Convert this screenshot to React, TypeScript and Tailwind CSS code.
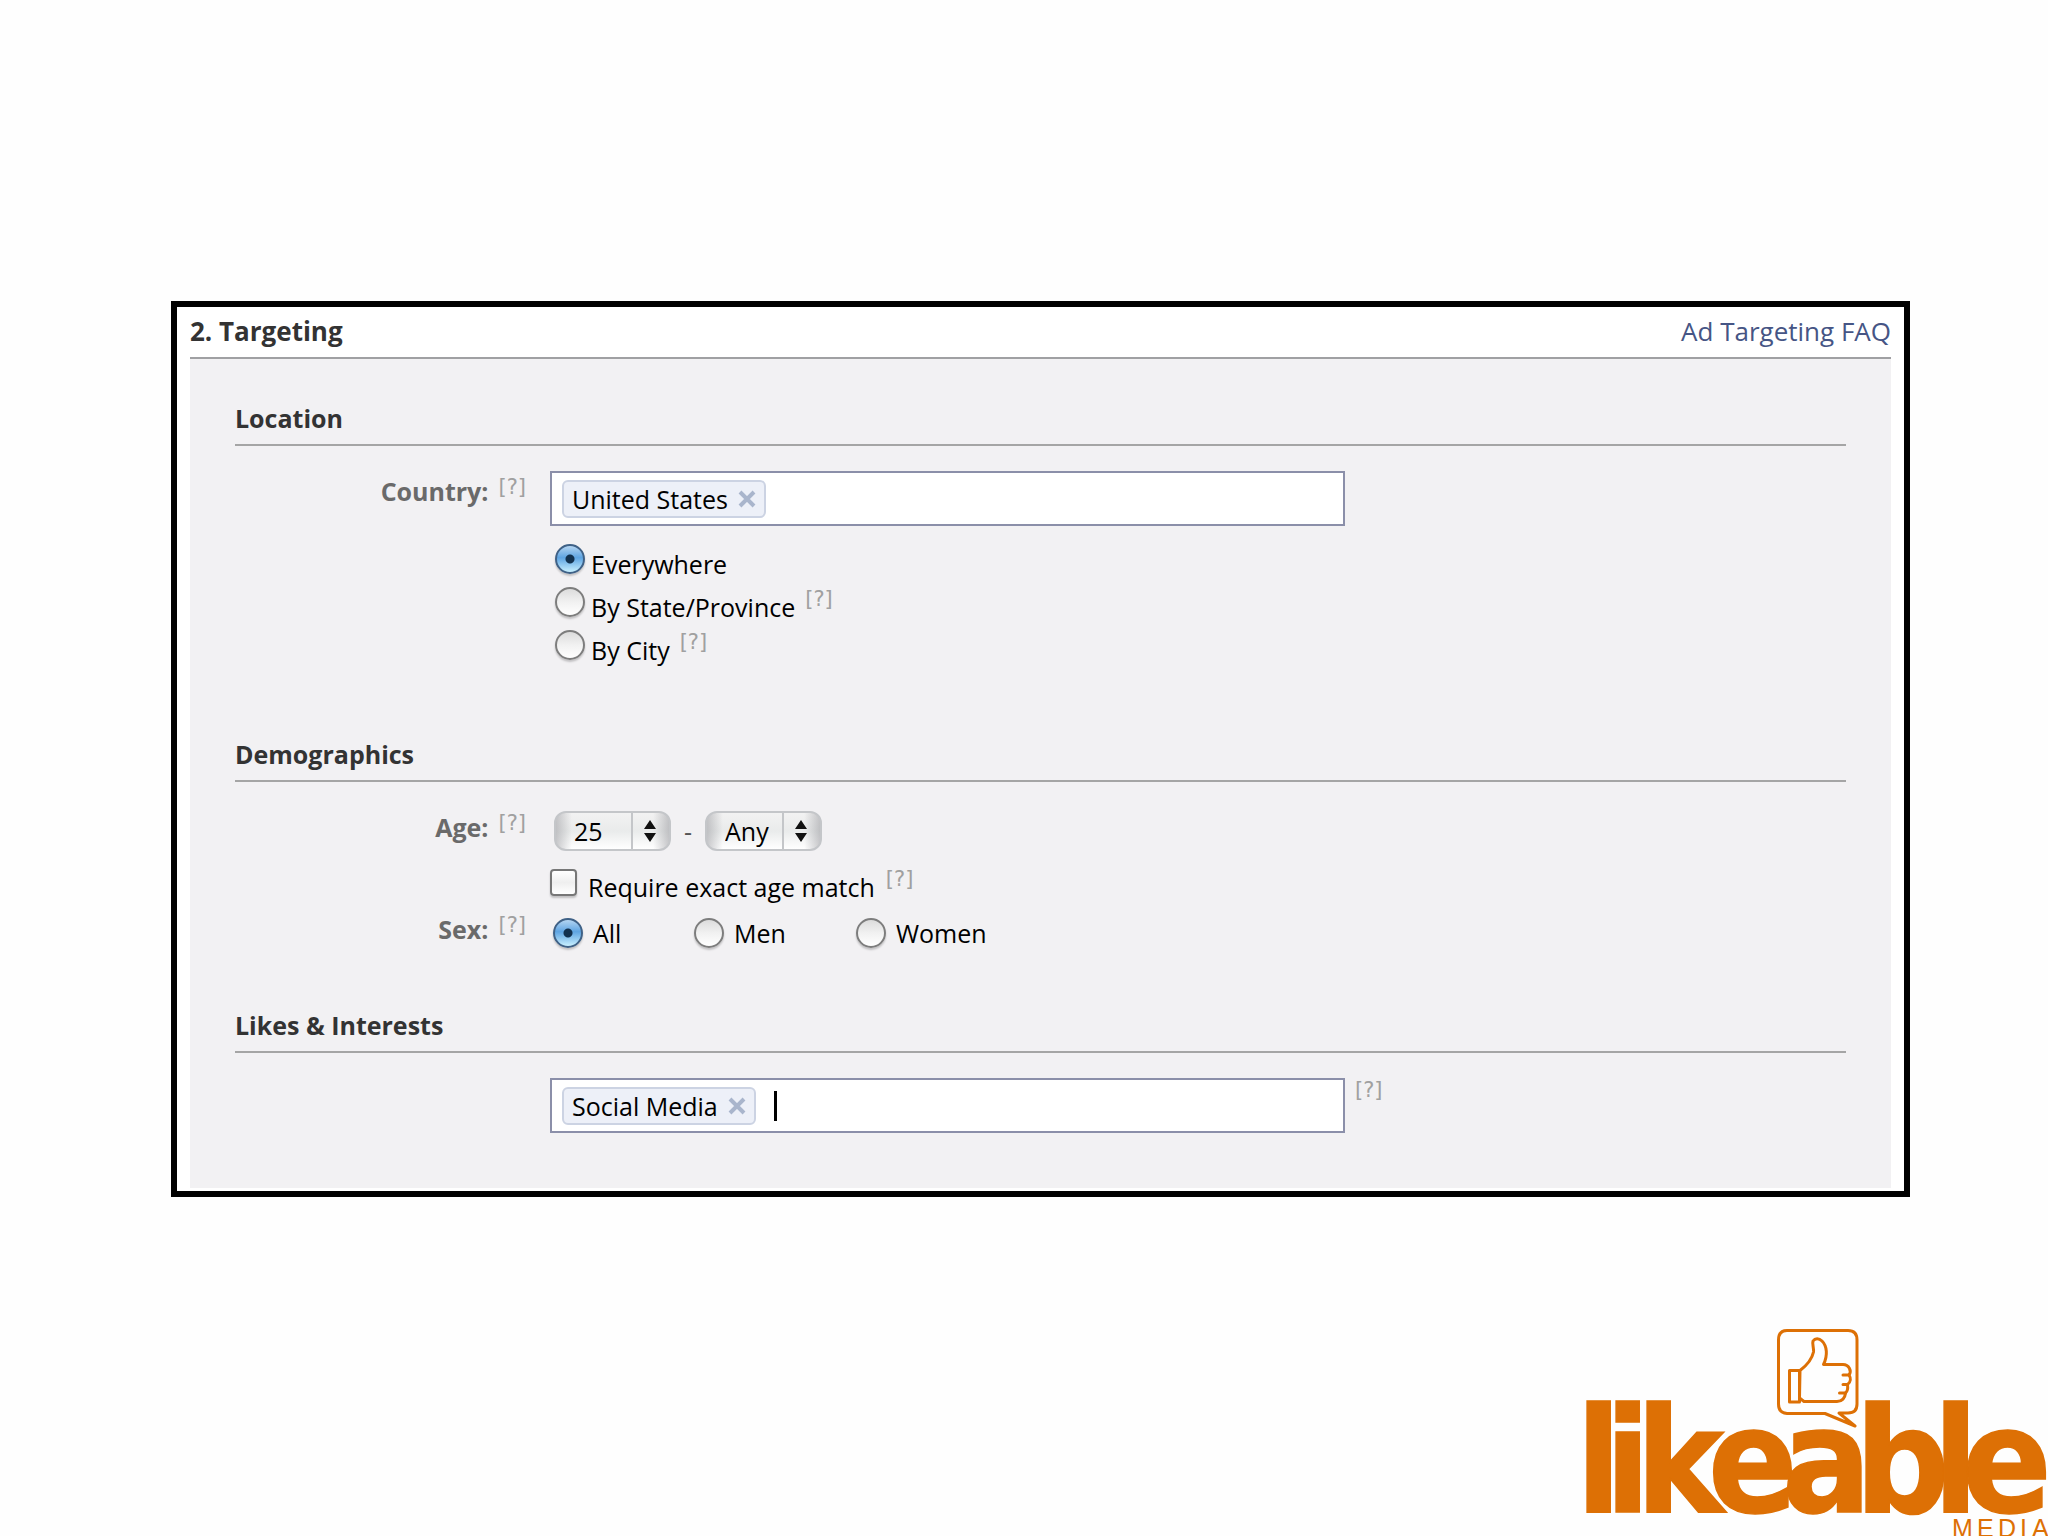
import type { ReactNode } from "react";

const radioClass =
  "appearance-none shrink-0 w-[30px] h-[30px] rounded-full border-2 border-[#7d7d7d] bg-linear-to-b from-[#dcdcdc] via-[#f1f1f1] to-white shadow-[0_2px_2px_rgba(0,0,0,0.2)] checked:border-[#3f6186] checked:bg-[radial-gradient(circle_at_50%_50%,#12314f_0,#12314f_4px,transparent_5px),linear-gradient(#b4d5f2,#5ea4e2_45%,#c8f0ff)]";

/* small grey [?] link */
const Help = ({ label }: { label: string }) => (
  <a
    href="#"
    aria-label={label}
    className="font-['DejaVu_Sans'] text-[21px] leading-6 font-normal text-[#a0a0a0]"
  >
    [?]
  </a>
);

const Section = ({ title, children }: { title: string; children: ReactNode }) => (
  <section>
    <h3 className="pb-[10px] border-b-2 border-[#a5a5a5] font-bold text-[#333333]">{title}</h3>
    {children}
  </section>
);

/* label on the left, control on the right */
const Row = ({ label, help, children }: { label?: ReactNode; help?: string; children: ReactNode }) => (
  <div className="flex items-start gap-6">
    <div className="flex justify-end items-start gap-[10px] w-[291px] shrink-0 font-bold text-[#6a6a6a]">
      {label}
      {help && <Help label={help} />}
    </div>
    {children}
  </div>
);

const TokenBox = ({ label, token, caret }: { label: string; token: string; caret?: boolean }) => (
  <div className="flex items-center flex-1 max-w-[795px] h-[55px] pl-[10px] bg-white border-2 border-[#8b8fa9]">
    <span className="flex items-center gap-[10px] h-[38px] px-2 rounded-md border-2 border-[#ccd3e3] bg-[#edf0f8] text-black whitespace-nowrap">
      {token}
      <button type="button" aria-label={"Remove " + token}>
        <svg width="18" height="18" viewBox="0 0 18 18" stroke="#a9b5cc" strokeWidth="4">
          <path d="M2 2 L16 16 M16 2 L2 16" />
        </svg>
      </button>
    </span>
    {caret && <span className="w-[3px] h-[30px] ml-[18px] bg-black" />}
    <input aria-label={label} type="text" className="flex-1 min-w-0 h-full outline-none" />
  </div>
);

const AgeSelect = ({ label, options }: { label: string; options: string[] }) => (
  <div className="relative w-[117px] h-10">
    <select
      aria-label={label}
      className="appearance-none w-full h-full pl-[18px] rounded-xl border-2 border-[#c4c6c9] bg-[linear-gradient(90deg,rgba(150,150,155,0.5),transparent_14%,transparent_86%,rgba(150,150,155,0.5)),linear-gradient(#f2f2f2,#e9ebeb_50%,#ffffff)] text-black"
    >
      {options.map((o) => (
        <option key={o}>{o}</option>
      ))}
    </select>
    <span className="absolute right-0 top-0 flex items-center justify-center w-10 h-full border-l-2 border-[#c4c6c9] pointer-events-none">
      <svg width="12" height="24" viewBox="0 0 12 24" fill="#111" className="mr-1">
        <path d="M6 1 L12 10 H0 Z M0 14 H12 L6 23 Z" />
      </svg>
    </span>
  </div>
);

const Logo = () => (
  <svg width="476" height="211" viewBox="-8 0 476 211" role="img" aria-label="likeable media" className="block">
    <g fill="#dd7005">
      <text
        y="187"
        x="-4 25 56 128 202 275 353 382"
        stroke="#dd7005"
        strokeWidth="1.5"
        className="font-['DejaVu_Sans_Condensed'] text-[147px] font-bold"
      >
        likeable
      </text>
      <text y="212" x="372 397 418 440 452" className="font-['Liberation_Sans'] text-[25px]">
        MEDIA
      </text>
    </g>
    <g fill="#fefefe" stroke="#dd7005" strokeWidth="3" strokeLinejoin="round" strokeLinecap="round">
      <path d="M207 5.5 H268 Q277 5.5 277 15 V79 Q277 88 268 88 H259 L275 101 L245 88.5 H207 Q198.500 88 198.500 79 V15 Q198.500 5.500 207 5.500 Z" />
      <path d="M209.500 45.500 H219.500 V77 H209.500 Z" />
      <path d="M220 45.500 C226 41 232 34 233.500 27 C234 23 232 19 233 16 C235 13 239 13 242 16 C247 21 248 30 243.500 39.500 H263 C269 39.500 272 46 269 50 C271 53 271 57 267.500 59.500 C268 63 268 66 265.500 68 C265 73 262 76.500 257 76.500 H224 L219.500 73 Z" />
      <path d="M263 50 H269 M263 59.500 H267.500 M259.500 68 H265.500" />
    </g>
  </svg>
);

export default function App() {
  return (
    <div className="flex flex-col justify-between min-h-screen overflow-hidden bg-[#fefefe] font-['Open_Sans',sans-serif] text-[25px] leading-8">
      <main className="pt-[301px] pl-[171px] pr-[138px]">
        <form className="border-[6px] border-black bg-white px-[13px] pb-[3px]">
          <header className="flex justify-between h-[52px] pt-2 border-b-2 border-[#a0a0a3] text-[26px]">
            <h2 className="font-bold text-[#333333]">2. Targeting</h2>
            <a href="#" className="text-[#465585]">
              Ad Targeting FAQ
            </a>
          </header>

          <div className="bg-[#f2f1f3] px-[45px] pt-[43px] pb-[55px]">
            {/* Location */}
            <Section title="Location">
              <div className="pt-[25px] pb-[65px]">
                <div className="flex items-start gap-6">
                  <div className="flex justify-end items-start gap-[10px] w-[291px] shrink-0 pt-1 font-bold text-[#6a6a6a]">
                    Country:
                    <Help label="About country" />
                  </div>
                  <TokenBox label="Country" token="United States" />
                </div>
                <div className="mt-[18px]">
                  <Row>
                    <div className="pl-[5px] text-black">
                      <div className="flex items-start gap-[6px] h-[43px]">
                        <input id="everywhere" type="radio" name="area" defaultChecked className={radioClass} />
                        <label htmlFor="everywhere" className="mt-1">Everywhere</label>
                      </div>
                      <div className="flex items-start gap-[6px] h-[43px]">
                        <input id="state" type="radio" name="area" className={radioClass} />
                        <label htmlFor="state" className="mt-1 mr-1">By State/Province</label>
                        <Help label="About states" />
                      </div>
                      <div className="flex items-start gap-[6px] h-[43px]">
                        <input id="city" type="radio" name="area" className={radioClass} />
                        <label htmlFor="city" className="mt-1 mr-1">By City</label>
                        <Help label="About cities" />
                      </div>
                    </div>
                  </Row>
                </div>
              </div>
            </Section>

            {/* Demographics */}
            <Section title="Demographics">
              <div className="pt-[29px] pb-[60px]">
                <Row label="Age:" help="About age">
                  <div className="flex items-center pl-1 text-[#555555]">
                    <AgeSelect label="Youngest age" options={["25", "26", "27"]} />
                    <span className="w-[34px] text-center">-</span>
                    <AgeSelect label="Oldest age" options={["Any", "30", "40"]} />
                  </div>
                </Row>
                <div className="pt-4 pb-[10px]">
                  <Row>
                    <div className="flex items-start gap-[11px] text-black">
                      <input
                        id="exact"
                        type="checkbox"
                        className="appearance-none w-[27px] h-[27px] mt-[2px] rounded-sm border-2 border-[#777777] bg-linear-to-b from-white via-[#efefef] to-white shadow-[0_2px_2px_rgba(0,0,0,0.2)]"
                      />
                      <label htmlFor="exact" className="mt-1">Require exact age match</label>
                      <Help label="About exact age match" />
                    </div>
                  </Row>
                </div>
                <Row label="Sex:" help="About sex">
                  <div className="flex pt-1 pl-[3px] text-black">
                    <label className="flex items-center gap-[10px] w-[141px]">
                      <input type="radio" name="sex" defaultChecked className={radioClass} />
                      All
                    </label>
                    <label className="flex items-center gap-[10px] w-[162px]">
                      <input type="radio" name="sex" className={radioClass} />
                      Men
                    </label>
                    <label className="flex items-center gap-[10px]">
                      <input type="radio" name="sex" className={radioClass} />
                      Women
                    </label>
                  </div>
                </Row>
              </div>
            </Section>

            {/* Likes */}
            <Section title="Likes & Interests">
              <div className="pt-[25px]">
                <Row>
                  <div className="flex items-start gap-[10px] flex-1">
                    <TokenBox label="Likes and interests" token="Social Media" caret />
                    <Help label="About likes and interests" />
                  </div>
                </Row>
              </div>
            </Section>
          </div>
        </form>
      </main>

      <footer className="flex justify-end">
        <Logo />
      </footer>
    </div>
  );
}
